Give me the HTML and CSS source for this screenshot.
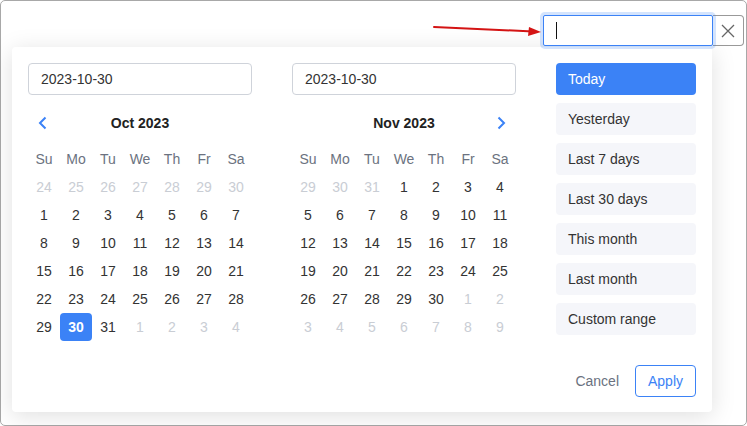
FILE: index.html
```html
<!DOCTYPE html>
<html>
<head>
<meta charset="utf-8">
<link rel="stylesheet" href="styles.css">
</head>
<body>
<div class="frame">
  <div class="toprow">
    <div class="field"><span class="caret"></span></div>
    <div class="clear">
      <svg width="14" height="14" viewBox="0 0 14 14"><path d="M1 1L13 13M13 1L1 13" stroke="#666" stroke-width="1.3" fill="none"/></svg>
    </div>
  </div>
  <svg class="arrow" width="112" height="14" viewBox="0 0 112 14">
    <path d="M1 3 L100 7.5" stroke="#d41414" stroke-width="2" fill="none" stroke-linecap="round"/>
    <path d="M96 3 L108 8 L95 12 Z" fill="#d41414"/>
  </svg>
  <div class="popup">
    <div class="cal">
      <div class="dinput">2023-10-30</div>
      <div class="head">
        <svg class="chev" width="12" height="14" viewBox="0 0 12 14"><path d="M8.5 1.5L3 7l5.5 5.5" stroke="#3b82f6" stroke-width="2" fill="none"/></svg>
        <span>Oct 2023</span>
      </div>
      <div class="grid">
        <div class="wd">Su</div><div class="wd">Mo</div><div class="wd">Tu</div><div class="wd">We</div><div class="wd">Th</div><div class="wd">Fr</div><div class="wd">Sa</div>
        <div class="d off">24</div><div class="d off">25</div><div class="d off">26</div><div class="d off">27</div><div class="d off">28</div><div class="d off">29</div><div class="d off">30</div>
        <div class="d">1</div><div class="d">2</div><div class="d">3</div><div class="d">4</div><div class="d">5</div><div class="d">6</div><div class="d">7</div>
        <div class="d">8</div><div class="d">9</div><div class="d">10</div><div class="d">11</div><div class="d">12</div><div class="d">13</div><div class="d">14</div>
        <div class="d">15</div><div class="d">16</div><div class="d">17</div><div class="d">18</div><div class="d">19</div><div class="d">20</div><div class="d">21</div>
        <div class="d">22</div><div class="d">23</div><div class="d">24</div><div class="d">25</div><div class="d">26</div><div class="d">27</div><div class="d">28</div>
        <div class="d">29</div><div class="d sel">30</div><div class="d">31</div><div class="d off">1</div><div class="d off">2</div><div class="d off">3</div><div class="d off">4</div>
      </div>
    </div>
    <div class="cal">
      <div class="dinput">2023-10-30</div>
      <div class="head">
        <span>Nov 2023</span>
        <svg class="chev right" width="12" height="14" viewBox="0 0 12 14"><path d="M3.5 1.5L9 7l-5.5 5.5" stroke="#3b82f6" stroke-width="2" fill="none"/></svg>
      </div>
      <div class="grid">
        <div class="wd">Su</div><div class="wd">Mo</div><div class="wd">Tu</div><div class="wd">We</div><div class="wd">Th</div><div class="wd">Fr</div><div class="wd">Sa</div>
        <div class="d off">29</div><div class="d off">30</div><div class="d off">31</div><div class="d">1</div><div class="d">2</div><div class="d">3</div><div class="d">4</div>
        <div class="d">5</div><div class="d">6</div><div class="d">7</div><div class="d">8</div><div class="d">9</div><div class="d">10</div><div class="d">11</div>
        <div class="d">12</div><div class="d">13</div><div class="d">14</div><div class="d">15</div><div class="d">16</div><div class="d">17</div><div class="d">18</div>
        <div class="d">19</div><div class="d">20</div><div class="d">21</div><div class="d">22</div><div class="d">23</div><div class="d">24</div><div class="d">25</div>
        <div class="d">26</div><div class="d">27</div><div class="d">28</div><div class="d">29</div><div class="d">30</div><div class="d off">1</div><div class="d off">2</div>
        <div class="d off">3</div><div class="d off">4</div><div class="d off">5</div><div class="d off">6</div><div class="d off">7</div><div class="d off">8</div><div class="d off">9</div>
      </div>
    </div>
    <div class="side">
      <div class="preset active">Today</div>
      <div class="preset">Yesterday</div>
      <div class="preset">Last 7 days</div>
      <div class="preset">Last 30 days</div>
      <div class="preset">This month</div>
      <div class="preset">Last month</div>
      <div class="preset">Custom range</div>
      <div class="actions">
        <span class="cancel">Cancel</span>
        <span class="apply">Apply</span>
      </div>
    </div>
  </div>
</div>
</body>
</html>
```

FILE: styles.css
```css
* { box-sizing: border-box; }
html, body { margin: 0; padding: 0; }
body {
  width: 747px;
  height: 426px;
  font-family: "Liberation Sans", Arial, sans-serif;
  font-size: 14px;
  color: #333;
  background: #fff;
  overflow: hidden;
}
.frame {
  position: relative;
  width: 747px;
  height: 426px;
  border: 1px solid #a8a8a8;
  border-radius: 5px;
  background: #fff;
  padding-top: 14px;
}
.toprow {
  display: flex;
  justify-content: flex-end;
  padding-right: 2px;
  height: 32px;
}
.field {
  width: 170px;
  height: 31px;
  border: 1px solid #3b82f6;
  border-radius: 2px;
  box-shadow: 0 0 0 3px rgba(59,130,246,0.22);
  background: #fff;
  position: relative;
  z-index: 2;
  padding: 6px 0 0 12px;
}
.caret {
  display: block;
  width: 1px;
  height: 17px;
  background: #111;
}
.clear {
  width: 31px;
  height: 31px;
  border: 1px solid #999;
  border-left: none;
  border-radius: 0 4px 4px 0;
  display: flex;
  align-items: center;
  justify-content: center;
}
.arrow {
  position: absolute;
  left: 432px;
  top: 23px;
  z-index: 3;
}
.popup {
  position: relative;
  z-index: 1;
  width: 700px;
  margin-left: 11px;
  background: #fff;
  border-radius: 4px;
  box-shadow: 0 4px 24px rgba(0,0,0,0.13);
  display: flex;
  gap: 40px;
  padding: 16px 16px 15px 16px;
}
.cal { width: 224px; }
.dinput {
  height: 32px;
  border: 1px solid #cfd3da;
  border-radius: 4px;
  padding: 0 12px;
  line-height: 30px;
  color: #333;
}
.head {
  position: relative;
  height: 32px;
  margin-top: 12px;
  margin-bottom: 6px;
  display: flex;
  align-items: center;
  justify-content: center;
  font-weight: bold;
  color: #222;
}
.chev { position: absolute; left: 9px; top: 9px; }
.chev.right { left: auto; right: 9px; }
.grid {
  display: grid;
  grid-template-columns: repeat(7, 32px);
  grid-auto-rows: 28px;
}
.wd, .d {
  display: flex;
  align-items: center;
  justify-content: center;
}
.wd { color: #6b7280; }
.d { color: #333; border-radius: 4px; }
.d.off { color: #c9cdd4; }
.d.sel { background: #3b82f6; color: #fff; font-weight: bold; }
.side {
  width: 140px;
  display: flex;
  flex-direction: column;
  gap: 8px;
}
.preset {
  height: 32px;
  line-height: 32px;
  padding-left: 12px;
  background: #f5f6fa;
  border-radius: 4px;
  color: #333;
}
.preset.active { background: #3b82f6; color: #fff; }
.actions {
  margin-top: 22px;
  display: flex;
  justify-content: flex-end;
  align-items: center;
  gap: 16px;
}
.cancel { color: #6b7280; }
.apply {
  height: 32px;
  width: 61px;
  border: 1px solid #3b82f6;
  border-radius: 4px;
  color: #3b82f6;
  display: flex;
  align-items: center;
  justify-content: center;
}
```
